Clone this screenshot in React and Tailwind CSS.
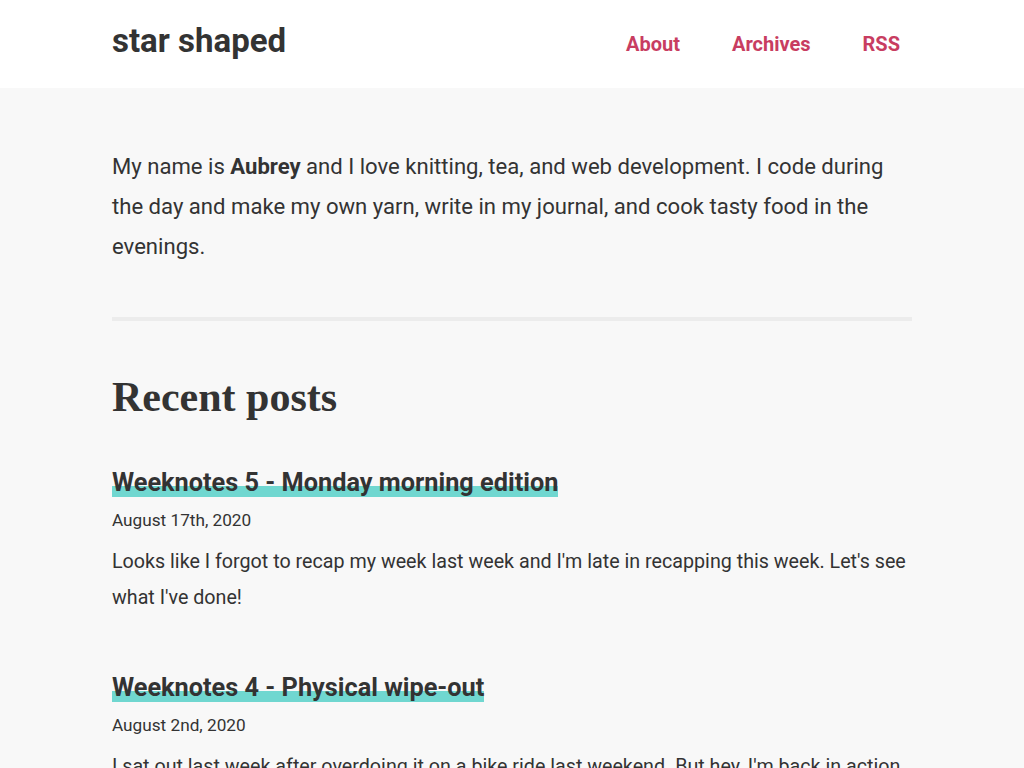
import React from 'react';

const posts = [
  {
    title: 'Weeknotes 5 - Monday morning edition',
    date: 'August 17th, 2020',
    excerpt:
      "Looks like I forgot to recap my week last week and I'm late in recapping this week. Let's see what I've done!",
  },
  {
    title: 'Weeknotes 4 - Physical wipe-out',
    date: 'August 2nd, 2020',
    excerpt:
      "I sat out last week after overdoing it on a bike ride last weekend. But hey, I'm back in action now and ready to share what I've been up to.",
  },
];

function App() {
  return (
    <div className="min-h-screen bg-[#f8f8f8] text-[#333] font-['Roboto','Liberation_Sans',sans-serif]">
      <header className="bg-white h-[88px]">
        <div className="max-w-[800px] mx-auto h-full flex items-center justify-between">
          <a href="#" className="text-[33px] font-bold leading-none -mt-[8px] text-[#333]">star shaped</a>
          <nav className="flex gap-[52px] pr-3 text-[20px] font-bold text-[#c83d61]">
            <a href="#">About</a>
            <a href="#">Archives</a>
            <a href="#">RSS</a>
          </nav>
        </div>
      </header>

      <main className="max-w-[800px] mx-auto pt-[58px]">
        <p className="text-[22.1px] leading-[40px]">
          My name is <strong className="font-bold">Aubrey</strong> and I love knitting, tea, and web development. I code during
          the day and make my own yarn, write in my journal, and cook tasty food in the evenings.
        </p>

        <hr className="mt-[51px] border-0 h-[4px] bg-[#ececec]" />

        <h2 className="mt-[51px] text-[42px] leading-[50px] font-bold font-['Liberation_Serif','Times_New_Roman',serif]">
          Recent posts
        </h2>

        <div className="mt-[45px] flex flex-col gap-[56px]">
          {posts.map((post) => (
            <article key={post.title}>
              <h3 className="text-[25.3px] leading-[32px] font-bold">
                <a
                  href="#"
                  className="bg-[linear-gradient(transparent_63%,#70d7d0_63%)]"
                >
                  {post.title}
                </a>
              </h3>
              <p className="mt-[7px] text-[17.2px] leading-[28px]">{post.date}</p>
              <p className="mt-[10px] text-[19.7px] leading-[36px]">{post.excerpt}</p>
            </article>
          ))}
        </div>
      </main>
    </div>
  );
}

export default App;
